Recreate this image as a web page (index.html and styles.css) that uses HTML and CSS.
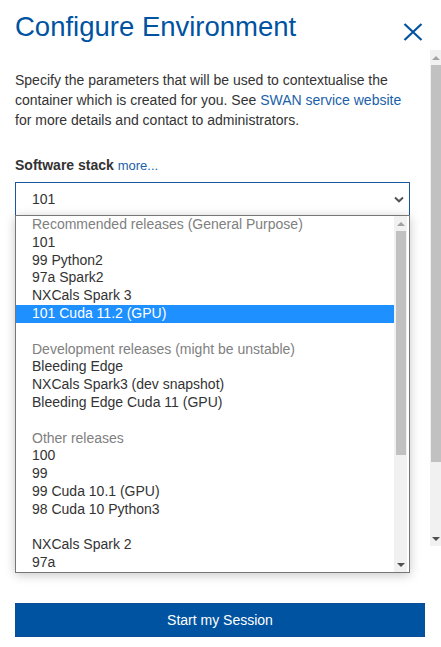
FILE: index.html
```html
<!DOCTYPE html>
<html>
<head>
<meta charset="utf-8">
<link rel="stylesheet" href="styles.css">
</head>
<body>
<div class="modal">
  <div class="header">
    <h1 class="title">Configure Environment</h1>
    <button class="close" aria-label="Close">
      <svg width="20" height="20" viewBox="0 0 20 20"><path d="M1.5 2 L18.5 18 M18.5 2 L1.5 18" stroke="#0053a1" stroke-width="2.2" fill="none"/></svg>
    </button>
  </div>
  <div class="body">
    <div class="content">
      <p class="intro">Specify the parameters that will be used to contextualise the container which is created for you. See <a class="link" href="#">SWAN service website</a> for more details and contact to administrators.</p>
      <div class="label">Software stack <a class="link more" href="#">more...</a></div>
      <div class="select">
        <span>101</span>
        <svg width="10" height="7" viewBox="0 0 10 7"><path d="M1 1.5 L5 5.3 L9 1.5" stroke="#555" stroke-width="2" fill="none"/></svg>
      </div>
    </div>
    <div class="vscroll outer">
      <div class="arrow up light"></div>
      <div class="thumb outer-thumb"></div>
      <div class="track-rest"></div>
      <div class="arrow down"></div>
    </div>
  </div>
  <div class="footer">
    <button class="start">Start my Session</button>
  </div>

  <div class="popup">
    <div class="list">
      <div class="row group">Recommended releases (General Purpose)</div>
      <div class="row">101</div>
      <div class="row">99 Python2</div>
      <div class="row">97a Spark2</div>
      <div class="row">NXCals Spark 3</div>
      <div class="row selected">101 Cuda 11.2 (GPU)</div>
      <div class="row"></div>
      <div class="row group">Development releases (might be unstable)</div>
      <div class="row">Bleeding Edge</div>
      <div class="row">NXCals Spark3 (dev snapshot)</div>
      <div class="row">Bleeding Edge Cuda 11 (GPU)</div>
      <div class="row"></div>
      <div class="row group">Other releases</div>
      <div class="row">100</div>
      <div class="row">99</div>
      <div class="row">99 Cuda 10.1 (GPU)</div>
      <div class="row">98 Cuda 10 Python3</div>
      <div class="row"></div>
      <div class="row">NXCals Spark 2</div>
      <div class="row">97a</div>
    </div>
    <div class="vscroll inner">
      <div class="arrow up mid"></div>
      <div class="thumb inner-thumb"></div>
      <div class="track-rest"></div>
      <div class="arrow down"></div>
    </div>
  </div>
</div>
</body>
</html>
```

FILE: styles.css
```css
* { box-sizing: border-box; }
html, body { margin: 0; padding: 0; background: #fff; }
body {
  font-family: "Liberation Sans", Arial, sans-serif;
  color: #333;
  font-size: 14px;
  width: 441px;
  height: 647px;
  overflow: hidden;
}
.modal { position: relative; width: 441px; height: 647px; }

.header {
  height: 50px;
  display: flex;
  justify-content: space-between;
  align-items: flex-start;
  padding: 11px 18px 0 15px;
}
.title {
  margin: 0;
  font-weight: normal;
  font-size: 27.5px;
  line-height: 32px;
  color: #0053a1;
}
.close {
  margin-top: 11px;
  border: 0;
  background: none;
  padding: 0;
  width: 20px;
  height: 20px;
  display: block;
}
.close svg { display: block; }

.body {
  height: 496px;
  display: flex;
}
.content {
  flex: 1;
  padding: 20px 20px 0 15px;
}
.intro {
  margin: 0 0 25px 0;
  line-height: 20px;
  font-size: 14px;
}
.link { color: #1a5fa9; text-decoration: none; }
.label {
  font-weight: bold;
  line-height: 20px;
  margin-bottom: 6px;
}
.more { font-weight: normal; font-size: 13px; }
.select {
  height: 34px;
  border: 1px solid #1b56a0;
  display: flex;
  align-items: center;
  justify-content: space-between;
  padding: 0 5px 0 16px;
  font-size: 14px;
  color: #333;
}
.select svg { display: block; margin-top: 1px; }

.vscroll {
  display: flex;
  flex-direction: column;
  background: #f1f1f1;
}
.vscroll.outer { width: 11px; }
.arrow {
  height: 15px;
  display: flex;
  align-items: center;
  justify-content: center;
}
.arrow::before {
  content: "";
  width: 0; height: 0;
  border-left: 4px solid transparent;
  border-right: 4px solid transparent;
}
.arrow.up::before { border-bottom: 4px solid #a3a3a3; }
.arrow.up.mid::before { border-bottom-color: #a0a0a0; }
.arrow.down::before { border-top: 4px solid #505050; }
.thumb { background: #c1c1c1; margin-left: 1px; }
.outer-thumb { height: 397px; }
.track-rest { flex: 1; }

.footer {
  padding: 57px 16px 0 15px;
}
.start {
  width: 100%;
  height: 34px;
  background: #0053a1;
  border: 1px solid #0a4f96;
  color: #fff;
  font-family: "Liberation Sans", Arial, sans-serif;
  font-size: 14px;
  padding: 0;
}

.popup {
  position: absolute;
  left: 15px;
  top: 215px;
  width: 395px;
  height: 358px;
  background: #fff;
  border: 1px solid #767676;
  box-shadow: 0 2px 10px rgba(0,0,0,0.22);
  display: flex;
  padding-right: 2px;
}
.list { width: 378px; }
.row {
  height: 17.8px;
  line-height: 17.8px;
  padding-left: 16px;
  font-size: 14px;
  color: #333;
  white-space: nowrap;
}
.row.group { color: #808080; }
.row.selected { background: #1e90ff; color: #fff; }
.vscroll.inner { width: 13px; }
.inner-thumb { height: 224px; margin-left: 2px; margin-right: 1px; }
```
